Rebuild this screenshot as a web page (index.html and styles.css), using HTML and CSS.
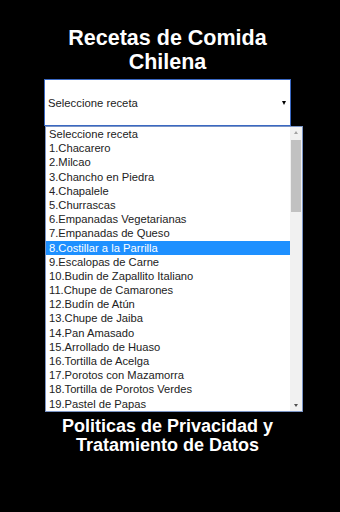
FILE: index.html
```html
<!DOCTYPE html>
<html lang="es">
<head>
<meta charset="utf-8">
<title>Recetas de Comida Chilena</title>
<link rel="stylesheet" href="styles.css">
</head>
<body>
<main class="page">
  <h1 class="title">Recetas de Comida<br>Chilena</h1>
  <div class="select">
    <span class="select-value">Seleccione receta</span>
    <span class="caret"></span>
  </div>
  <div class="dropdown">
    <ul class="options">
      <li class="option">Seleccione receta</li>
      <li class="option">1.Chacarero</li>
      <li class="option">2.Milcao</li>
      <li class="option">3.Chancho en Piedra</li>
      <li class="option">4.Chapalele</li>
      <li class="option">5.Churrascas</li>
      <li class="option">6.Empanadas Vegetarianas</li>
      <li class="option">7.Empanadas de Queso</li>
      <li class="option option-active">8.Costillar a la Parrilla</li>
      <li class="option">9.Escalopas de Carne</li>
      <li class="option">10.Budin de Zapallito Italiano</li>
      <li class="option">11.Chupe de Camarones</li>
      <li class="option">12.Budín de Atún</li>
      <li class="option">13.Chupe de Jaiba</li>
      <li class="option">14.Pan Amasado</li>
      <li class="option">15.Arrollado de Huaso</li>
      <li class="option">16.Tortilla de Acelga</li>
      <li class="option">17.Porotos con Mazamorra</li>
      <li class="option">18.Tortilla de Porotos Verdes</li>
      <li class="option">19.Pastel de Papas</li>
    </ul>
    <div class="scrollbar">
      <span class="arrow arrow-up"></span>
      <span class="track"><span class="thumb"></span></span>
      <span class="arrow arrow-down"></span>
    </div>
  </div>
  <p class="footer">Politicas de Privacidad y<br>Tratamiento de Datos</p>
</main>
</body>
</html>
```
FILE: styles.css
```css
html, body {
  margin: 0;
  padding: 0;
  background: #000;
}

body {
  font-family: "Liberation Sans", Arial, sans-serif;
  width: 340px;
  height: 512px;
  overflow: hidden;
}

.page {
  width: 247px;
  margin-left: 44px;
  padding-top: 25.5px;
}

.title {
  margin: 0;
  color: #fff;
  font-size: 21.5px;
  line-height: 24px;
  font-weight: bold;
  text-align: center;
}

.select {
  box-sizing: border-box;
  margin-top: 5.5px;
  height: 47px;
  background: #fff;
  border: 1px solid #3a68c2;
  display: flex;
  align-items: center;
  justify-content: space-between;
  padding: 0 4px 0 3px;
  font-size: 11.3px;
  color: #222;
}

.caret {
  width: 0;
  height: 0;
  border-left: 2.5px solid transparent;
  border-right: 2.5px solid transparent;
  border-top: 4px solid #000;
  margin-top: 1px;
}

.dropdown {
  box-sizing: border-box;
  width: 258px;
  height: 286px;
  margin-left: 1px;
  border: 1px solid #7b95c6;
  background: #fff;
  display: flex;
}

.options {
  list-style: none;
  margin: 0;
  padding: 0;
  flex: 1;
  overflow: hidden;
}

.option {
  height: 14.2px;
  line-height: 14.2px;
  padding-left: 3px;
  font-size: 11.2px;
  color: #222;
  white-space: nowrap;
}

.option-active {
  background: #1e90ff;
  color: #fff;
}

.scrollbar {
  width: 12px;
  background: #f1f1f1;
  display: flex;
  flex-direction: column;
  align-items: center;
}

.arrow {
  width: 0;
  height: 0;
  border-left: 2.5px solid transparent;
  border-right: 2.5px solid transparent;
}

.arrow-up {
  margin-top: 4px;
  border-bottom: 3px solid #a3a3a3;
}

.arrow-down {
  margin-bottom: 4px;
  border-top: 3px solid #505050;
}

.track {
  flex: 1;
  align-self: stretch;
  display: flex;
  flex-direction: column;
  padding: 6px 1px 0;
}

.thumb {
  height: 72px;
  background: #c1c1c1;
}

.footer {
  margin: 5.3px 0 0;
  color: #fff;
  font-size: 18px;
  line-height: 19px;
  font-weight: bold;
  text-align: center;
}
```
